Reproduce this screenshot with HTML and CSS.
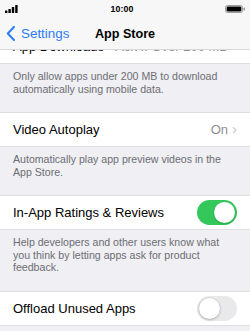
FILE: index.html
```html
<!DOCTYPE html>
<html>
<head>
<meta charset="utf-8">
<link rel="stylesheet" href="styles.css">
</head>
<body>
<div class="phone">
  <div class="status">
    <svg class="signal" width="14" height="8" viewBox="0 0 14 8">
      <rect x="0" y="5.5" width="2.4" height="2.5" rx="0.5" fill="#000"/>
      <rect x="3.4" y="4" width="2.4" height="4" rx="0.5" fill="#000"/>
      <rect x="6.8" y="2" width="2.4" height="6" rx="0.5" fill="#000"/>
      <rect x="10.2" y="0" width="2.4" height="8" rx="0.5" fill="#000"/>
    </svg>
    <span class="time">10:00</span>
    <svg class="battery" width="21" height="8" viewBox="0 0 21 8">
      <rect x="0.5" y="0.5" width="17" height="7" rx="2" fill="none" stroke="#9a9a9a" stroke-width="1"/>
      <rect x="1.6" y="1.6" width="14.8" height="4.8" rx="1.2" fill="#000"/>
      <rect x="18.5" y="2.6" width="1.5" height="2.8" rx="0.7" fill="#9a9a9a"/>
    </svg>
  </div>
  <div class="nav">
    <div class="back">
      <svg width="10" height="15" viewBox="0 0 10 15"><path d="M8 1 L1.8 7.5 L8 14" fill="none" stroke="#2d7cf6" stroke-width="2" stroke-linecap="round" stroke-linejoin="round"/></svg>
      <span>Settings</span>
    </div>
    <div class="title">App Store</div>
    <div></div>
  </div>
  <div class="scroll">
    <div class="content">
      <div class="row">
        <span>App Downloads</span>
        <span class="value">Ask If Over 200 MB <span class="chev">›</span></span>
      </div>
      <div class="footer">Only allow apps under 200 MB to download automatically using mobile data.</div>
      <div class="row">
        <span>Video Autoplay</span>
        <span class="value">On <span class="chev">›</span></span>
      </div>
      <div class="footer">Automatically play app preview videos in the App Store.</div>
      <div class="row">
        <span>In-App Ratings &amp; Reviews</span>
        <span class="switch on"><span class="knob"></span></span>
      </div>
      <div class="footer">Help developers and other users know what you think by letting apps ask for product feedback.</div>
      <div class="row">
        <span>Offload Unused Apps</span>
        <span class="switch off"><span class="knob"></span></span>
      </div>
    </div>
  </div>
</div>
</body>
</html>
```

FILE: styles.css
```css
html, body {
  margin: 0;
  padding: 0;
}
body {
  font-family: "Liberation Sans", Arial, sans-serif;
  background: #efeff4;
  color: #000;
}
.phone {
  width: 250px;
  height: 331px;
  display: flex;
  flex-direction: column;
  overflow: hidden;
}
.status {
  height: 20px;
  background: #f7f7f7;
  display: flex;
  align-items: center;
  justify-content: space-between;
  padding: 0 4px 3px 5px;
  box-sizing: border-box;
}
.signal {
  width: 14px;
  height: 8px;
}
.time {
  font-size: 8.8px;
  font-weight: bold;
  letter-spacing: 0.1px;
}
.battery {
  width: 21px;
  height: 8px;
}
.nav {
  height: 30px;
  box-sizing: border-box;
  background: #f7f7f7;
  border-bottom: 1px solid #d8d8dc;
  display: grid;
  grid-template-columns: 1fr auto 1fr;
  align-items: center;
  padding: 0 0 2px 0;
}
.back {
  display: flex;
  align-items: center;
  gap: 5px;
  padding-left: 6px;
  color: #2d7cf6;
  font-size: 13.4px;
}
.back svg {
  display: block;
}
.title {
  font-size: 12.6px;
  font-weight: bold;
}
.scroll {
  flex: 1;
  overflow: hidden;
}
.content {
  margin-top: -21px;
}
.row {
  height: 35px;
  box-sizing: border-box;
  background: #fff;
  border-top: 1px solid #dfdfe3;
  border-bottom: 1px solid #dfdfe3;
  display: flex;
  align-items: center;
  justify-content: space-between;
  padding: 0 13px;
  font-size: 13px;
}
.value {
  color: #8e8e93;
  display: flex;
  align-items: center;
  gap: 4px;
}
.chev {
  color: #c4c4c8;
  font-size: 15px;
  line-height: 1;
  margin-top: -2px;
}
.footer {
  padding: 6px 13px 17px;
  font-size: 10.6px;
  line-height: 12.5px;
  color: #6d6d72;
}
.switch {
  width: 40px;
  height: 25px;
  border-radius: 13px;
  box-sizing: border-box;
  padding: 2px;
  display: flex;
}
.switch.on {
  background: #34c759;
  justify-content: flex-end;
}
.switch.off {
  background: #e9e9eb;
  justify-content: flex-start;
}
.knob {
  width: 21px;
  height: 21px;
  border-radius: 50%;
  background: #fff;
  box-shadow: 0 1px 2px rgba(0, 0, 0, 0.2);
}
.switch.off .knob {
  box-shadow: 0 0 0 0.5px rgba(0, 0, 0, 0.08), 0 1px 3px rgba(0, 0, 0, 0.22);
}
```
